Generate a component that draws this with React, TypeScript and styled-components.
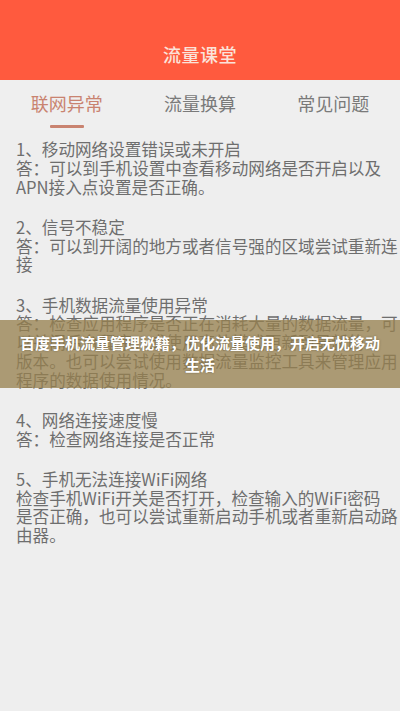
import React from "react";
import styled, { createGlobalStyle } from "styled-components";

const Global = createGlobalStyle`
  html, body { margin: 0; padding: 0; background: #eeeeee; }
  body { font-family: "Noto Sans CJK SC", "Noto Sans", sans-serif; }
  * { box-sizing: border-box; }
`;

const Page = styled.div`
  position: relative;
  width: 400px;
  height: 711px;
  overflow: hidden;
  background: #eeeeee;
  display: flex;
  flex-direction: column;
`;

const Header = styled.header`
  height: 80px;
  background: #ff5a3e;
  display: flex;
  align-items: flex-end;
  justify-content: center;
  padding-bottom: 15px;
`;

const Title = styled.h1`
  margin: 0;
  font-size: 18px;
  line-height: 22px;
  font-weight: 500;
  color: #fbe3da;
  letter-spacing: 0.5px;
`;

const Tabs = styled.nav`
  height: 50px;
  display: grid;
  grid-template-columns: repeat(3, 1fr);
  background: #efefef;
`;

const Tab = styled.div<{ $active?: boolean }>`
  position: relative;
  display: flex;
  justify-content: center;
  padding-top: 12px;
  font-size: 18px;
  line-height: 22px;
  color: ${(p) => (p.$active ? "#c98370" : "#7a7a7a")};
`;

const Underline = styled.span`
  position: absolute;
  bottom: 2px;
  left: 50%;
  transform: translateX(-50%);
  width: 34px;
  height: 3px;
  background: #c98370;
  border-radius: 1px;
`;

const Content = styled.main`
  padding: 10px 16px 0 16px;
  display: flex;
  flex-direction: column;
  gap: 21.5px;
`;

const Item = styled.section`
  display: flex;
  flex-direction: column;
`;

const Line = styled.div`
  font-size: 16.6px;
  line-height: 18.75px;
  color: #6e6e6e;
  white-space: nowrap;
`;

const Banner = styled.div`
  position: absolute;
  left: 0;
  right: 0;
  top: 320px;
  height: 68px;
  background: rgba(150, 128, 78, 0.76);
  display: flex;
  align-items: center;
  justify-content: center;
  padding: 0 14px;
`;

const BannerText = styled.p`
  margin: 0;
  text-align: center;
  font-size: 15px;
  line-height: 22px;
  font-weight: 700;
  color: #ffffff;
  text-shadow: 0 0 2px rgba(60, 50, 30, 0.5);
`;

const items: string[][] = [
  ["1、移动网络设置错误或未开启", "答：可以到手机设置中查看移动网络是否开启以及", "APN接入点设置是否正确。"],
  ["2、信号不稳定", "答：可以到开阔的地方或者信号强的区域尝试重新连", "接"],
  [
    "3、手机数据流量使用异常",
    "答：检查应用程序是否正在消耗大量的数据流量，可",
    "以关闭后台程序，或使用高效模式更新到最新的",
    "版本。也可以尝试使用数据流量监控工具来管理应用",
    "程序的数据使用情况。",
  ],
  ["4、网络连接速度慢", "答：检查网络连接是否正常"],
  ["5、手机无法连接WiFi网络", "检查手机WiFi开关是否打开，检查输入的WiFi密码", "是否正确，也可以尝试重新启动手机或者重新启动路", "由器。"],
];

export default function App() {
  return (
    <Page>
      <Global />
      <Header>
        <Title>流量课堂</Title>
      </Header>
      <Tabs>
        <Tab $active>
          联网异常
          <Underline />
        </Tab>
        <Tab>流量换算</Tab>
        <Tab>常见问题</Tab>
      </Tabs>
      <Content>
        {items.map((lines, i) => (
          <Item key={i}>
            {lines.map((l, j) => (
              <Line key={j}>{l}</Line>
            ))}
          </Item>
        ))}
      </Content>
      <Banner>
        <BannerText>百度手机流量管理秘籍，优化流量使用，开启无忧移动生活</BannerText>
      </Banner>
    </Page>
  );
}
